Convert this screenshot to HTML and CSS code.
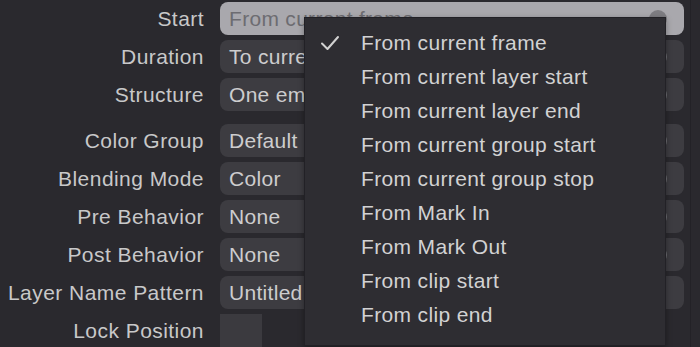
FILE: index.html
```html
<!DOCTYPE html>
<html lang="en">
<head>
    <title>Layer Settings</title>
    <link rel="stylesheet" href="styles.css">
</head>
<body>
    <div class="panel">
        <form class="campos">
            <span class="etiqueta">Start</span>
            <div class="selector activo"><span>From current frame</span><span class="flecha"></span></div>

            <span class="etiqueta">Duration</span>
            <div class="selector"><span>To current frame</span><span class="flecha"></span></div>

            <span class="etiqueta">Structure</span>
            <div class="selector"><span>One empty frame</span><span class="flecha"></span></div>

            <span class="etiqueta separado">Color Group</span>
            <div class="selector separado"><span>Default</span><span class="flecha"></span></div>

            <span class="etiqueta">Blending Mode</span>
            <div class="selector"><span>Color</span><span class="flecha"></span></div>

            <span class="etiqueta">Pre Behavior</span>
            <div class="selector"><span>None</span><span class="flecha"></span></div>

            <span class="etiqueta">Post Behavior</span>
            <div class="selector"><span>None</span><span class="flecha"></span></div>

            <span class="etiqueta">Layer Name Pattern</span>
            <div class="selector"><span>Untitled</span></div>

            <span class="etiqueta">Lock Position</span>
            <div><span class="casilla"></span></div>
        </form>

        <ul class="menu">
            <li class="opcion marcada">
                <svg class="check" width="20" height="16" viewBox="0 0 20 16"><path d="M2 8.5 L7.5 14 L18 2" fill="none" stroke="#d2d2d2" stroke-width="2" stroke-linecap="round" stroke-linejoin="round"/></svg>
                From current frame
            </li>
            <li class="opcion">From current layer start</li>
            <li class="opcion">From current layer end</li>
            <li class="opcion">From current group start</li>
            <li class="opcion">From current group stop</li>
            <li class="opcion">From Mark In</li>
            <li class="opcion">From Mark Out</li>
            <li class="opcion">From clip start</li>
            <li class="opcion">From clip end</li>
        </ul>
    </div>
</body>
</html>
```

FILE: styles.css
```css
body{
    margin: 0;
    background-color: #2a292e;
    overflow: hidden;
}

*{font-family: "Liberation Sans", Arial, sans-serif;}

.panel{
    position: relative;
    width: 690px;
    height: 347px;
    border-right: 1px solid #232227;
}

.campos{
    display: grid;
    grid-template-columns: 204px 464px;
    column-gap: 16px;
    row-gap: 5px;
    padding-top: 2px;
    margin: 0;
}

.etiqueta{
    height: 33px;
    line-height: 33px;
    text-align: right;
    font-size: 21px;
    letter-spacing: 0.45px;
    color: #c8c8c9;
    white-space: nowrap;
}

.separado{margin-top: 8px;}

.selector{
    height: 33px;
    display: flex;
    align-items: center;
    justify-content: space-between;
    padding: 0 17px 0 9px;
    background-color: #3d3c41;
    border-radius: 8px;
    font-size: 21px;
    letter-spacing: 0.3px;
    color: #cdcdce;
    white-space: nowrap;
}

.activo{
    background-color: #a9a8ad;
    color: #6d6c71;
}

.flecha{
    width: 18px;
    height: 18px;
    border-radius: 50%;
    background-color: #706f74;
}

.activo .flecha{background-color: #7e7d82;}

.casilla{
    display: block;
    width: 42px;
    height: 40px;
    background-color: #3b3a3f;
}

.menu{
    position: absolute;
    left: 304px;
    top: 17px;
    width: 360px;
    height: 319px;
    margin: 0;
    padding: 8px 0 0 0;
    list-style: none;
    background-color: #2e2d32;
    border: 1px solid #222126;
    box-shadow: 0 2px 6px rgba(0, 0, 0, 0.35);
    box-sizing: content-box;
}

.opcion{
    position: relative;
    height: 34px;
    line-height: 34px;
    padding-left: 56px;
    font-size: 21px;
    letter-spacing: 0.35px;
    color: #d2d2d3;
    white-space: nowrap;
}

.check{
    position: absolute;
    left: 15px;
    top: 9px;
}
```
